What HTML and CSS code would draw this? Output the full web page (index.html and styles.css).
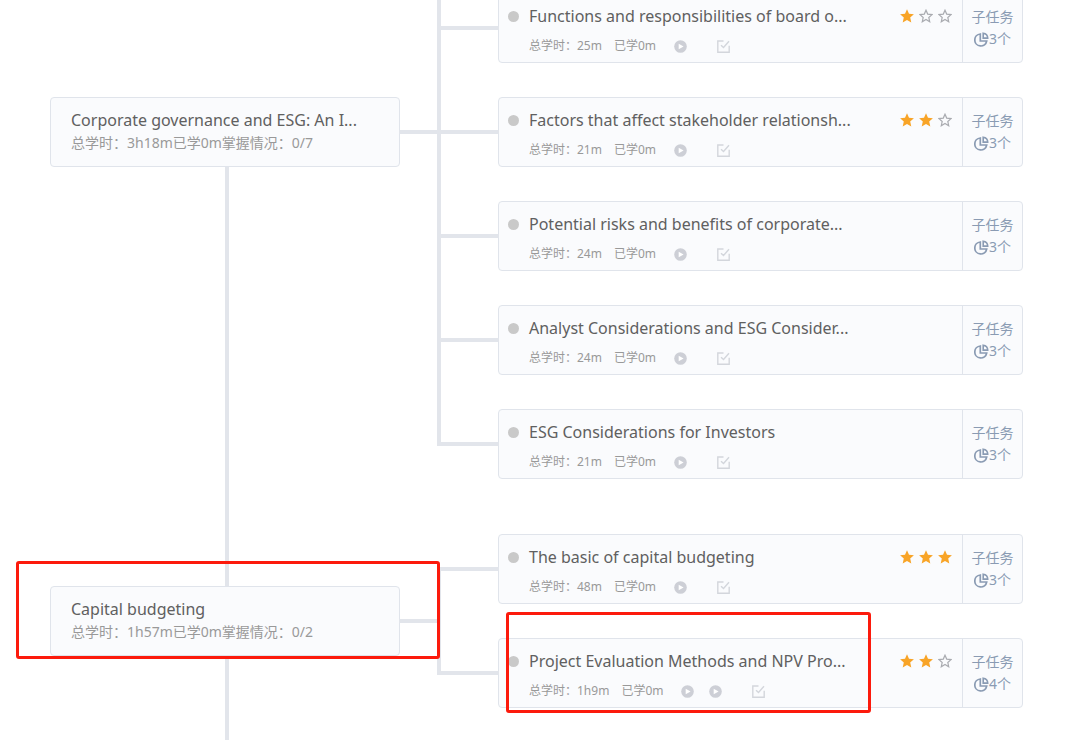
FILE: index.html
```html
<!DOCTYPE html>
<html lang="zh-CN">
<head>
<meta charset="utf-8">
<meta name="viewport" content="width=device-width, initial-scale=1">
<title>学习地图</title>
<link rel="stylesheet" href="styles.css">
</head>
<body>
<svg class="sprite" aria-hidden="true">
  <symbol id="play" viewBox="0 0 13 13"><circle cx="6.5" cy="6.5" r="6.3" fill="#cdcfd6"/><path d="M4.700 3.700v5.600L9.600 6.500z" fill="#fff"/></symbol>
  <symbol id="check" viewBox="0 0 13 13"><path d="M6.500 1H.8v11.200h11.400V5.800M4 5.200l2.500 2.300L12 1.200" fill="none" stroke="#d3d6dc" stroke-width="1.400"/></symbol>
  <symbol id="star-on" viewBox="0 0 14 14"><path d="M7 .2l2 4.500 4.900.5-3.700 3.300 1.100 5L7 11l-4.300 2.500 1.100-5L.1 5.200 5 4.700z" fill="#f8a427"/></symbol>
  <symbol id="star-off" viewBox="0 0 14 14"><path d="M7 1.200l1.700 3.900 4.300.5-3.200 2.900.9 4.200L7 10.500l-3.700 2.200.9-4.200L1 5.600l4.300-.5z" fill="none" stroke="#a9abb0" stroke-width="1.200"/></symbol>
  <symbol id="pie" viewBox="0 0 15 15"><path d="M6.300 2A6 6 0 1 0 12.700 9H6.300z" fill="none" stroke="#8a9bb3" stroke-width="1.700"/><path d="M9.200 1.200v4.900h4.500A5 5 0 0 0 9.200 1.200z" fill="none" stroke="#8a9bb3" stroke-width="1.600"/></symbol>
</svg>

<main class="map">
  <section class="group">
    <div class="trunk">
      <div class="lead"></div>
      <article class="topic">
        <h2 class="title">Corporate governance and ESG: An I...</h2>
        <p class="summary">总学时：3h18m已学0m掌握情况：0/7</p>
      </article>
      <div class="stem"></div>
    </div>
    <ul class="tasks">
      <li class="branch">
        <article class="task">
          <div class="body">
            <div class="heading"><span class="dot"></span><h3 class="title">Functions and responsibilities of board o...</h3>
              <span class="stars" role="img" aria-label="1/3"><svg><use href="#star-on"/></svg><svg><use href="#star-off"/></svg><svg><use href="#star-off"/></svg></span></div>
            <div class="meta"><span>总学时：25m</span><span>已学0m</span><span class="plays"><button aria-label="播放"><svg><use href="#play"/></svg></button></span><button class="quiz" aria-label="练习"><svg><use href="#check"/></svg></button></div>
          </div>
          <button class="subtasks"><span>子任务</span><span class="count"><svg><use href="#pie"/></svg>3个</span></button>
        </article>
      </li>
      <li class="branch">
        <article class="task">
          <div class="body">
            <div class="heading"><span class="dot"></span><h3 class="title">Factors that affect stakeholder relationsh...</h3>
              <span class="stars" role="img" aria-label="2/3"><svg><use href="#star-on"/></svg><svg><use href="#star-on"/></svg><svg><use href="#star-off"/></svg></span></div>
            <div class="meta"><span>总学时：21m</span><span>已学0m</span><span class="plays"><button aria-label="播放"><svg><use href="#play"/></svg></button></span><button class="quiz" aria-label="练习"><svg><use href="#check"/></svg></button></div>
          </div>
          <button class="subtasks"><span>子任务</span><span class="count"><svg><use href="#pie"/></svg>3个</span></button>
        </article>
      </li>
      <li class="branch">
        <article class="task">
          <div class="body">
            <div class="heading"><span class="dot"></span><h3 class="title">Potential risks and benefits of corporate...</h3></div>
            <div class="meta"><span>总学时：24m</span><span>已学0m</span><span class="plays"><button aria-label="播放"><svg><use href="#play"/></svg></button></span><button class="quiz" aria-label="练习"><svg><use href="#check"/></svg></button></div>
          </div>
          <button class="subtasks"><span>子任务</span><span class="count"><svg><use href="#pie"/></svg>3个</span></button>
        </article>
      </li>
      <li class="branch">
        <article class="task">
          <div class="body">
            <div class="heading"><span class="dot"></span><h3 class="title">Analyst Considerations and ESG Consider...</h3></div>
            <div class="meta"><span>总学时：24m</span><span>已学0m</span><span class="plays"><button aria-label="播放"><svg><use href="#play"/></svg></button></span><button class="quiz" aria-label="练习"><svg><use href="#check"/></svg></button></div>
          </div>
          <button class="subtasks"><span>子任务</span><span class="count"><svg><use href="#pie"/></svg>3个</span></button>
        </article>
      </li>
      <li class="branch">
        <article class="task">
          <div class="body">
            <div class="heading"><span class="dot"></span><h3 class="title">ESG Considerations for Investors</h3></div>
            <div class="meta"><span>总学时：21m</span><span>已学0m</span><span class="plays"><button aria-label="播放"><svg><use href="#play"/></svg></button></span><button class="quiz" aria-label="练习"><svg><use href="#check"/></svg></button></div>
          </div>
          <button class="subtasks"><span>子任务</span><span class="count"><svg><use href="#pie"/></svg>3个</span></button>
        </article>
      </li>
    </ul>
  </section>

  <section class="group group-last">
    <div class="trunk">
      <div class="stem stem-in"></div>
      <article class="topic">
        <h2 class="title">Capital budgeting</h2>
        <p class="summary">总学时：1h57m已学0m掌握情况：0/2</p>
        <span class="mark mark-topic"></span>
      </article>
      <div class="stem"></div>
    </div>
    <ul class="tasks tasks-closed">
      <li class="branch">
        <article class="task">
          <div class="body">
            <div class="heading"><span class="dot"></span><h3 class="title">The basic of capital budgeting</h3>
              <span class="stars" role="img" aria-label="3/3"><svg><use href="#star-on"/></svg><svg><use href="#star-on"/></svg><svg><use href="#star-on"/></svg></span></div>
            <div class="meta"><span>总学时：48m</span><span>已学0m</span><span class="plays"><button aria-label="播放"><svg><use href="#play"/></svg></button></span><button class="quiz" aria-label="练习"><svg><use href="#check"/></svg></button></div>
          </div>
          <button class="subtasks"><span>子任务</span><span class="count"><svg><use href="#pie"/></svg>3个</span></button>
        </article>
      </li>
      <li class="branch">
        <article class="task">
          <div class="body">
            <div class="heading"><span class="dot"></span><h3 class="title">Project Evaluation Methods and NPV Pro...</h3>
              <span class="stars" role="img" aria-label="2/3"><svg><use href="#star-on"/></svg><svg><use href="#star-on"/></svg><svg><use href="#star-off"/></svg></span></div>
            <div class="meta"><span>总学时：1h9m</span><span>已学0m</span><span class="plays"><button aria-label="播放"><svg><use href="#play"/></svg></button><button aria-label="播放"><svg><use href="#play"/></svg></button></span><button class="quiz" aria-label="练习"><svg><use href="#check"/></svg></button></div>
          </div>
          <button class="subtasks"><span>子任务</span><span class="count"><svg><use href="#pie"/></svg>4个</span></button>
          <span class="mark mark-task"></span>
        </article>
      </li>
    </ul>
  </section>
</main>
</body>
</html>
```
FILE: styles.css
```css
* {
  box-sizing: border-box;
}

html,
body {
  height: 100%;
}

body {
  margin: 0;
  overflow: hidden;
  background: #fff;
  color: #606060;
  font-family: "Noto Sans", "Noto Sans CJK SC", sans-serif;
}

h2,
h3,
p,
ul {
  margin: 0;
  padding: 0;
}

ul {
  list-style: none;
}

button {
  display: block;
  padding: 0;
  border: 0;
  background: none;
  font: inherit;
  cursor: pointer;
}

svg {
  display: block;
}

.sprite {
  position: absolute;
  width: 0;
  height: 0;
}

/* The map is scrolled slightly past the top edge of its first visible card. */
.map {
  display: flex;
  flex-direction: column;
  min-height: calc(100% + 7px);
  margin-top: -7px;
  padding: 0 54px 0 50px;
}

.group {
  display: grid;
  grid-template-columns: 350px minmax(0, 1fr);
  column-gap: 37px;
}

.group-last {
  flex: 1;
}

/* Left column: topic card and the spine running through it */
.trunk {
  display: flex;
  flex-direction: column;
}

.lead {
  height: 104px;
}

.stem {
  flex: 1;
  width: 4px;
  margin-left: 175px;
  background: #e2e5eb;
}

.stem-in {
  flex: none;
  height: 52px;
}

.topic,
.task {
  position: relative;
  border: 1px solid #e0e4eb;
  border-radius: 4px;
  background: #fafbfd;
}

.topic {
  padding: 9px 20px 13px;
}

.topic::after {
  content: "";
  position: absolute;
  top: 32px;
  left: 100%;
  width: 38px;
  height: 4px;
  background: #e2e5eb;
}

.title {
  font-size: 16px;
  font-weight: 400;
  line-height: 26px;
  white-space: nowrap;
}

.summary {
  color: #999;
  font-size: 14px;
  line-height: 20px;
  white-space: nowrap;
}

/* Right column: tasks joined to the topic by a shared rail */
.tasks {
  padding-bottom: 55px;
}

.branch {
  position: relative;
  padding: 0 0 34px 61px;
}

.branch:last-child {
  padding-bottom: 0;
}

.branch::before {
  content: "";
  position: absolute;
  top: 0;
  bottom: 0;
  left: 0;
  width: 4px;
  background: #e2e5eb;
}

.tasks-closed .branch:first-child::before {
  top: 33px;
}

.branch:last-child::before {
  bottom: 33px;
}

.task::before {
  content: "";
  position: absolute;
  top: 32px;
  right: 100%;
  width: 61px;
  height: 4px;
  background: #e2e5eb;
}

.task {
  display: flex;
}

.body {
  flex: 1;
  min-width: 0;
  padding: 9px 10px 6px 9px;
}

.heading {
  display: flex;
  align-items: center;
}

.dot {
  width: 11px;
  height: 11px;
  margin-right: 10px;
  border-radius: 50%;
  background: #c9c9c9;
}

.stars {
  display: flex;
  gap: 5px;
  margin-left: auto;
}

.stars svg {
  width: 14px;
  height: 14px;
}

.meta {
  display: flex;
  align-items: center;
  gap: 12px;
  margin-top: 7px;
  padding-left: 21px;
  color: #999;
  font-size: 12px;
  line-height: 20px;
}

.meta svg {
  width: 13px;
  height: 13px;
}

.plays {
  display: flex;
  gap: 15px;
  margin-left: 6px;
}

.quiz {
  margin-left: 18px;
}

.subtasks {
  display: flex;
  flex-direction: column;
  align-items: center;
  width: 60px;
  padding-top: 12px;
  border-left: 1px solid #e0e4eb;
  color: #8a9bb3;
  font-size: 14px;
  line-height: 22px;
}

.count {
  display: flex;
  align-items: center;
}

.count svg {
  width: 15px;
  height: 15px;
}

/* Red highlight frames */
.mark {
  position: absolute;
  z-index: 2;
  border: 3px solid #fc1a0c;
  border-radius: 3px;
  pointer-events: none;
}

.mark-topic {
  inset: -26px -41px -4px -35px;
}

.mark-task {
  inset: -27px 151px -6px 7px;
}
```
